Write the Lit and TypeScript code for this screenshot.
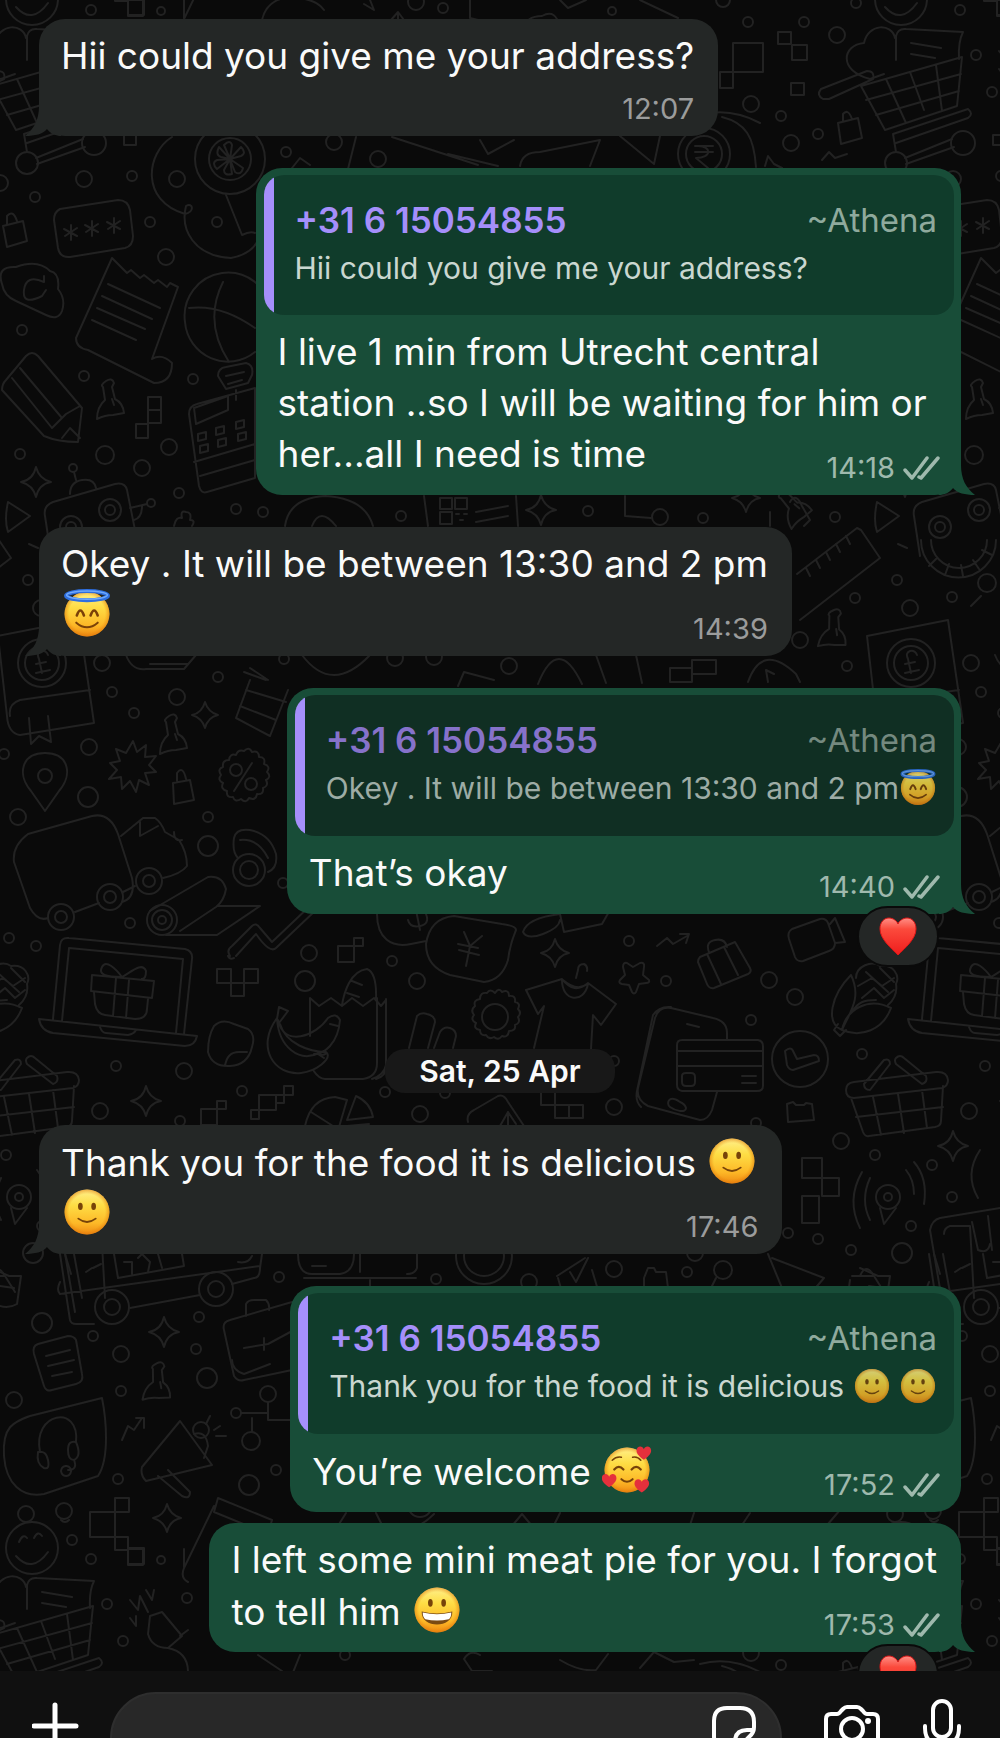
import { LitElement, html, svg, css, nothing } from "lit";
import { customElement, property } from "lit/decorators.js";
import { classMap } from "lit/directives/class-map.js";

type Face = "halo" | "smile" | "love" | "grin";
type Piece = string | { face: Face };

interface Quote {
  lines: Piece[];
  dim?: boolean;
}

interface Message {
  out?: boolean;
  time: string;
  lines: Piece[][];
  quote?: Quote;
  tail?: boolean;
  stacked?: boolean;
  reaction?: boolean;
  tight?: boolean;
}

const TILE_W = 869;
const TILE_H = 1549;

const DOTS = `91,10,5 161,11,4 416,2,8 443,8,5 612,11,4 723,0,7 748,22,5 804,22,5 856,3,5 837,35,8 751,104,8
781,116,5 791,143,8 818,134,5 976,55,5 992,92,5 334,142,8 286,152,5 378,159,8 84,179,8 132,176,5 177,179,8
35,197,5 0,183,8 150,222,5 217,222,5 166,257,8 22,330,5 84,376,5 193,379,5 105,455,9 169,447,8 20,454,5
142,468,8 179,493,5 236,509,5 263,512,5 401,516,5 588,511,5 703,518,5 835,517,5 897,580,5 987,583,9 855,598,5
910,608,8 952,597,5 800,640,8 284,659,5 102,663,8 509,666,8 847,666,5 218,677,5 395,658,8 434,657,8 112,692,5
177,697,8 134,713,5 89,747,8 88,797,10 4,754,5 18,817,8 208,817,5 208,846,10 283,883,5 130,923,5 9,938,5
36,946,5 309,953,8 305,981,10 392,961,5 417,981,8 629,941,5 666,981,5 769,980,8 795,997,8 116,1066,5
184,1071,8 100,1111,8 180,1121,5 242,1091,5 385,1092,5 445,1093,5 420,1114,8 751,1020,5 862,1054,5 614,1107,8
614,1061,5 756,1123,5 841,1141,8 6,1155,5 952,1197,5 932,1165,5 911,1226,5 851,1250,5 902,1253,10 818,1239,5
788,1233,5 279,1277,5 436,1279,5 529,1282,8 614,1269,8 687,1272,5 695,1253,8 199,1317,5 93,1336,5 42,1323,10
121,1354,8 196,1349,5 14,1400,8 121,1391,5 207,1378,10 118,1479,5 276,1470,5 249,1485,10 26,1514,8 64,1511,8
72,1540,5 187,1598,5 345,1655,5 230,159,35 230,159,21 704,154,26 704,154,18 110,510,11 110,510,5 71,527,11 71,527,5
73,468,4 151,503,4 660,517,8 32,1548,26 42,663,24 42,663,17 45,776,7 61,917,13 61,917,6 110,897,13 110,897,6
149,881,13 149,881,6 162,920,15 162,920,10 162,920,4 249,870,16 249,870,9 495,1017,13 800,1059,28 888,1197,4
888,1197,12 112,1307,17 112,1307,8 216,1289,17 216,1289,8 268,1394,8 236,1413,5 251,1441,9 896,163,11 963,143,12
484,1256,28 484,1256,20 236,770,6 251,784,6 723,1270,9 201,1430,8 420,1505,12`;

const BOXES = `733,43,30,29 778,32,13,12 792,45,15,15 791,83,13,12 720,72,13,16 128,0,15,16 124,135,12,10
148,397,13,13 148,410,13,13 136,424,12,14 217,969,14,14 244,969,14,14 231,983,13,13 338,946,16,16 354,938,9,8
201,1109,16,16 217,1101,9,8 251,1110,8,9 259,1095,17,15 276,1095,8,8 284,1086,9,9 541,1092,14,13 555,1105,14,13
569,1105,14,13 802,1158,20,20 822,1178,17,18 802,1196,17,27 115,1498,14,14 90,1512,25,25
115,1537,13,13 128,1548,16,16 440,498,12,11 455,498,12,11 440,512,12,12 692,660,24,14 670,668,22,14`;

const SPARKS = `36,482,15 541,510,15 205,715,13 555,953,14 146,1101,15 953,1146,15 164,1332,15 167,1518,14 746,498,14`;

const PINS = `112,400,0 175,735,0 160,1383,8 836,630,10 795,505,-30`;

const STROKES = [
  // shopping cart, label and heart
  "M823 99q-7-4-2-10l46-18q8 0 6 8l-44 20zM861 86L962 57 957 106 885 130zM866 100l95-26M876 115l83-24M886 79l20 44M910 72l14 38M936 65l6 46M893 134l75-25q6 5 0 9l-72 25M893 134l3 18M905 158l47-19M906 164l48-17",
  "M896 60V36q2-8 10-7l57 3q-5 10-4 27M911 43l30 5M911 54l24 4M870 79c-32-8-28-34-6-36 4-20 28-20 31-5M870 79l14-5",
  "M19 1542q4-9 8-4M34 1538q4-8 8-2M16 1556q16 18 32-4",
  // padlocks and password field
  "M838 123l20-5 4 20-21 6zM843 121v-7q5-6 9 5M3 226l20-5 4 20-20 6zM7 224v-8q6-7 10 5M173 783l17-3 4 20-20 4zM177 781v-8q6-8 9 6",
  "M60 209l58-9q10 0 12 10l3 26q0 10-8 12l-55 9q-10 1-12-9l-4-28q0-8 6-11zM71 225v15M64 229l13 7M77 228l-12 8M92 221v15M85 225l13 7M98 224l-12 8M114 218v15M107 222l13 7M120 221l-12 8",
  // citrus, blob and coins
  "M230 159l-6-14q6-6 8 0zM230 159l11-12q6 6 0 9zM230 159l13 9q-2 8-8 4zM230 159l2 15q-8 2-8-4zM230 159l-13 10q-6-6 0-9zM230 159l-11-12q-4 8 2 10zM172 137c-26 16-32 64 13 77 10-2 8-12 1-8-6 24 8 50 45 52q20-4 26-16M226 195l16 40q8-4 13-2M695 146h18M695 152h18M698 146c14 0 14 12-2 12l12 10M722 117c24 6 32 20 34 50",
  "M356 137l-8 32M392 137l86 28M448 154l50 12M480 140l8 14 26-14M520 166q2-14 20-14l60-12-10 26M620 136l34 28 6-28M765 166l3-10 6 8 8 4M822 160l7-8 6 6 12-4M310 165l-10-7-8 10M560 0l8 8 18-8M470 0v18l40 10M522 30q4-14 20-14 14-8 18 12M184 0v18M262 20q4-18 22-22 30-2 40 12M364 4l10 6-4-10M640 0l38 18M398 14v12M391 20l7-8 6 8",
  // receipt, cloud badge, ball
  "M112 258l-36 80q0 10 12 12l66 33q18 0 18-20-10-10-20-4l26-72-8-4-3 4-9-7-4 3-10-8-4 3-9-8-4 3-8-8zM108 284l52 24M102 296l50 23M97 308l48 21M92 320l44 20",
  "M2 284q-6-18 14-17 22-8 34 4 10 2 8 18 8 10 4 22-4 10-16 4l-30-14Q4 296 2 284zM44 282q-18-8-20 8t18 6l4-6M44 282v-6",
  "M185 322a43 43 0 0 1 86-12M185 322a43 43 0 0 0 70 30M223 282q-20 40 6 80M189 308q32-4 66 20",
  // pencil, calculator
  "M2 390q0-6 4-10l20-24q6-6 12 0l44 52-4 34q-20 0-34-6zM12 378l40 50M20 368l42 50M52 428l14-14 14-8M62 438l8-10 10 10",
  "M189 414q0-8 8-10l58-16v90l-48 14q-6 2-8-6zM194 408l34-12v14l-32 14zM198 434l8-2v7l-8 2zM216 428l8-2v7l-8 2zM236 422l8-2v7l-8 2zM200 446l8-2v7l-8 2zM218 440l8-2v7l-8 2zM238 434l8-2v7l-8 2zM194 462l61-18M200 476l55-16M218 376q0-8 8-9l20-4q8 2 6 12l-4 8-22 6zM226 376l18-4M228 384l14-4M236 390v10",
  // robot
  "M45 516q-2-10 8-14l62-18q10-2 12 6l12 60M45 516l6 40M70 494q0-12 12-14t14 8M74 472l2 8M130 508l17-4M134 520q8-2 8-14M52 540a37 37 0 0 0 75 0M62 540a27 27 0 0 0 56 0M68 558l-8 8M80 564l-4 11M92 565l2 11M104 560l6 9M113 550l10 5M38 548l-9-4M8 502l22 14-22 16q-4-12 0-30zM174 526q2-10 8-8-2-8 4-6 6 0 4 8 6 0 2 6",
  // things under the first reply
  "M285 526q4-28 40-30 40 2 48 30M312 526q8-20 24 0M424 496l4 30M516 496l2 30M476 512l32-6M476 522l32-6M625 496v20l26 2M790 502q6-10 12 4l8 14-6 6M770 526v-14M456 514h3M464 514h3M460 520h3",
  // ruler, book with pound sign
  "M797 574l60-46 4 2 19 28-80 62M806 568l4 8M816 560l4 8M826 552l4 8M836 544l4 8M846 536l4 8M981 596l-10 10M-2 636l81-16 15 103-74 12q-12-2-13-19L-2 636M10 716q-2-12 10-16l70-10M29 718l2 26 8-8 12 6-3-26M48 655q-2-5-7-4-5 2-2 8l3 14M36 664l10-2M36 673l14-3",
  "M126 655q6 16 20 14h38l12-14M150 664h38M302 655q30 40 68 0M244 672l22 8M250 668l18 12M458 686l6-14 30 8M538 684q20-50 44 0M596 655l10 28M636 655l6 28M748 682q14-40 48-8l4 8M768 682l-2-12 8 4",
  // drawing pin, badges and map marker
  "M45 811l-14-20c-14-16-10-38 14-38s28 22 14 38zM252 763l-18 28M133 741l4 11 9-7-1 12 11-1-7 9 7 7-11 1 4 12-10-5-3 12-6-11-8 8-1-12-12 2 8-9-7-7 10-2-4-12 10 4z",
  "M244 751q5-5 8 1 7-2 7 5 7 0 5 7 7 2 3 8 5 5-1 8 3 6-3 8 1 7-6 6-1 7-8 4-3 6-8 1-6 4-8-2-7 1-6-6-7-2-4-8-6-3-2-8-4-6 2-8-1-7 6-7 1-7 7-5 2-6 8-4z",
  "M250 680l-14 38 34 18 18-46M246 690l40 12M240 706l36 14",
  // van
  "M14 862q-2-16 14-28l64-18q18-4 26 18l14 44q4 20-10 24M14 862l16 46q8 14 18 10M75 912l24-9M123 892l12-6M121 836l22-18 12 0q6 4 10 14l14 8q8 12 8 26-6 8-24 12M140 822v14l18-10M174 832q0 10 8 8M234 838q2-10 16-8 20 4 26 24 2 14-8 18M234 838q-2 14 4 20M240 840q18-2 28 18",
  "M150 911l58-34q14-2 18 12-2 12-10 18l-36 24M166 935h51l43-29-42 0M230 956q-4-6 2-10l20-20q4-4 8 2l12 14 40-38M236 956l20-22q14 20 20 14l40-38M234 958q-4 2-6-2",
  // laptop with a present
  "M53 1019l7-74q1-8 9-7l116 11q8 2 7 10l-8 75M62 1021l7-73 114 11-7 74M39 1019l158 17q-2 10-12 10l-132-13q-12-2-14-14zM100 1027q2 6 6 6l22 2q6-1 8-5",
  "M92 975l62 6-2 17-61-7zM94 992l1 12q2 10 10 11l30 4q12 0 12-10l1-10M116 978l-3 38M129 980l-3 38M122 977c-6-8-16-18-20-10s4 10 20 10c8-4 20-16 24-6q0 8-4 8",
  // squares, bread bag, bananas
  "M310 1036v-38l9 8 12-8 11 8 10-8 11 8 11-8 7 8 5-6v62q2 14-10 17M313 1070q6 9 12 9h38q14-2 14-16v-65M342 1005c2-12 8-34 25-36q10 4 9 30M352 981l10 4M347 993l12 4M386 999v66q-2 10-14 14",
  "M279 1007l9 4-9 12-2-4zM277 1018c-22 30-2 58 24 55 16-2 30-14 26-20q-6 4-8 0c-20 10-40-6-42-34M278 1020c6 28 38 16 50-2q8-6 12 2c-2 24-16 34-26 34M280 1024c6 20 30 28 46 28M330 1024l8 2M318 1054l6 4",
  "M214 1026q8-8 20-2l14 5q8 6 4 18-4 18-22 19t-22-14q0-16 6-26zM225 1066q2-14 14-14l8 0",
  "M409 1048l8-32q4-4 10-2 8 2 8 8l-7 26M434 1048l6-16q4-6 10-4t6 8l-3 12",
  // money bags
  "M377 914c0 24 14 34 34 30l15-3M408 920q2 8 12 6t6-12M416 910l4 20M426 944q4-26 28-28l48 8q14 2 14 6-6 14-8 30-6 20-24 22l-34-7q-24-8-24-31zM464 932l6 14 12-10M470 946l-4 20M459 950l20 5M458 944l20 4",
  "M523 932q4-14 37-18M523 932q4 8 20 2t17-14M560 914l4 18 38-8 8-14M657 946l10-8 6 6 14-8M680 934l9 0-3 9",
  "M495 993q4-6 7-1 7-3 7 4 7-1 6 6 6 1 3 7 4 4 0 8 3 6-3 8 1 6-6 6-1 7-7 5-4 5-8 1-5 3-8-2-6 1-6-5-7-1-4-7-6-3-2-8-4-5 1-9-2-6 5-7 0-7 7-6 3-5 8 0z",
  // clothes, star, suitcase, video
  "M526 990l36-11q12 16 26 4l28 21-15 21-8-10-2 34M526 990l12 24 6-8-10 42M562 980c0 22 22 24 26 4M563 980q14 12 24 4M576 978l2-8q0-6 6-6 4 2 3 7",
  "M623 967q0-5 4-4l6 4 7-4q5-1 4 4l-1 8 6 5q1 3-3 3l-7 1-3 8q-2 3-4 0l-3-7-7-1q-4-1-2-4l5-5z",
  "M700 957l35-15 15 26q2 4-2 6l-34 14q-5 1-7-4l-9-22q0-3 2-5zM709 952q-4-10 6-12t12 7M707 954l14 30M724 947l14 28",
  "M792 929l28-10q6-1 8 4l7 20q0 6-6 8l-26 10q-6 1-8-4l-6-18q-2-7 3-10zM830 924l5-6 10 24-10 1",
  // phone with bank card, clock
  "M727 1039v-6q0-12-14-15l-42-10q-12-2-16 10l-17 70q-2 12 10 18l52 14q8 0 12-10l5-18M671 1007q-12-1-18 8l-16 76q-2 10 4 16M687 1024l12 3M680 1102c-12-8-14 2-10 5s16 7 16 1q-1-4-6-6zM682 1040h76q5 1 5 6v40q0 5-6 5h-75q-5-1-5-6v-40q0-5 5-5zM677 1051h86M677 1066h86M682 1076q0-3 4-3h5q4 0 4 4v5q0 4-4 4h-5q-4 0-4-4zM742 1076h14M742 1083h14",
  "M785 1051q6-5 8 0l4 8 17-4q5 0 5 6l-26 9q-4 0-6-5z",
  // corn cob
  "M851 975c-20 20-26 48-9 55 8-18 20-32 9-55zM842 1030c4-20 26-34 49-22-8 22-30 30-49 22zM838 1024l-4 6 6 6 6-6M856 978c0-12 16-18 24-12 14-2 20 10 16 18q2 12-8 21M858 986l14-8 10 8 12-8M862 998l12-10 10 10 10-8M866 972l22 20M880 968l14 14M852 1012c6-10 12-12 24-12",
  // basket
  "M846 1090q0-7 8-8l82-10q11-1 12 8 0 6-6 8l-88 10q-8 0-8-8zM851 1098l12 34q2 5 6 4l66-9q6-1 6-6l2-35M873 1097l8 38M898 1094l6 39M922 1090l5 38M856 1117l87-10M864 1084l20-24q6-2 6 4l-20 26q-6 0-6-6zM896 1058q4-4 8 0l22 18q2 6-4 8l-26-20q-2-4 0-6z",
  // items around the date
  "M305 1126q6-28 30-29l12 3-8 27M311 1112l22 14M356 1096q14 6 17 21l-26 3zM347 1126l22-2M468 1122q-2-8 6-12l24-14q6-2 10 6l20 30M500 1126l8-14 8 12M508 1112v16M787 1104l6-2 3 3h8l2-2 6 1 2 16-26 2z",
  // podcast, balloon face
  "M870 1178q-10 22 0 42M862 1172q-16 28-2 56M906 1170q8 10 8 24M914 1162q14 16 10 42M880 1208l4 16 12-16M980 1150q-16 24-2 48",
  // tram
  "M60 1254l10 66q1 4 6 4h18M65 1254l6 20M130 1308l70-13M232 1284l22-6q6 0 6-10l2-14M60 1282q-4 8 0 12l200-28M74 1254l8 44M92 1268l-6 4M114 1254l4 24 66-12-2-12M124 1262h8v12M138 1258l4-4 8 8-2 10M158 1254l4 14M238 1262q10 2 14-6",
  "M298 1254q0 20 14 20h28q14-2 14-20M304 1278h112M312 1266h14M360 1254v18M417 1254v14q-2 6-10 6M370 1280v8",
  "M557 1276l28-18M558 1278l4 14M570 1272l6 10 12-24M592 1270l6 20M644 1278l4-10 6 0 2 4 10 0 2 16-24 4zM768 1254l14 34M772 1258l52 20-12 14 10 14M852 1276l22 0 10 16M850 1280l-2 14M860 1276q6-14 14 0M716 1278l-6 12",
  // store on the right
  "M930 1230q2-10 10-12l60-10M930 1230l14 82M944 1234q0-6 6-8h20l4 72M972 1222l6 28q10 4 12-6M988 1216l4 34M962 1268l8-4M-9 1268l18 8 12 0-4 28q-10 6-22 0M0 1286l14 2",
  // briefcase, document, headset bubble
  "M224 1330q-2-8 6-10l62-18M224 1330l10 46q4 6 10 4l48-10M246 1316v-12q2-4 8-4h12q4 4 3 10M244 1348l24-4 26-14M264 1338v12",
  "M34 1354q-2-8 4-10l30-8q6 0 8 4l6 34q2 8-6 10l-24 6q-6 2-8-4zM46 1356l24-6M48 1366l26-6M52 1376l20-4",
  "M102 1398c4 20 8 60-4 78l-54 18c-22 4-38-10-40-38-2-30 10-34 26-40zM40 1452c-8-40 40-48 36-10M38 1452q8-2 10 8t-4 8q-8-4-6-16zM76 1442q-8-2-8 8t6 10q8-4 2-18M74 1460q4 10-6 10M66 1466a5 5 0 1 0 .1 0",
  // megaphone, trend arrow
  "M180 1421l32 44-66 16q-6-6-4-14zM158 1476l24 20q8 4 8-4l-22-22M194 1434q12-4 14 12l-4 12M206 1424l4-8M214 1430l6-4M216 1436h10M122 1440l6-14 6 4 8-12M136 1418l8 0v10M268 1402v18l28 0M241 1413h27M252 1418v14M232 1360q0 10 12 14l26-10",
  // closed books and bottom items
  "M218 1498l54 22-4 14-54-22zM214 1506l-30 62q-4 10 4 14M346 1513l-10 16M376 1513l8 16M392 1526q20 10 42-12M512 1526l10-12 10 12M560 1513l-6 12M694 1513l-4 12M750 1513l-8 12M840 1510l-12 14M930 1520q4 4 8 0",
  "M130 1600l8 10 2-14 8 16M146 1590l6 10 2-10M150 1616l12-4 20 24-14 12q-16 0-20-14zM130 1618l6 8 0-10M168 1648q20 4 20 24M180 1636l8-6",
  "M480 1655q-10-6-16 4l8 12 20 0M560 1660q20 12 36 10l12-16M640 1668l14-16 20 10 20-2M700 1664q30-8 60 8M258 1655l24 16M300 1655l-8 20",
];

const nums = (s: string) => s.trim().split(/\s+/).map((t) => t.split(",").map(Number));

const FACE_LABEL: Record<Face, string> = {
  halo: "😇",
  smile: "🙂",
  love: "🥰",
  grin: "😀",
};

const heart = (x: number, y: number, k: number) => svg`
  <path transform="translate(${x} ${y}) scale(${k})" fill="#e5303c"
    d="M0 10C-10 3-11-1-11-4-11-11-2-12 0-6 2-12 11-11 11-4 11-1 10 3 0 10z"></path>`;

const features: Record<Face, unknown> = {
  halo: svg`
    <path d="M14.500 26q3.500-10 7 0M28 26q3.500-10 7 0" fill="none" stroke="#7a4108" stroke-width="2.500" stroke-linecap="round"></path>
    <path d="M14 33q10.500 9 21 0" fill="none" stroke="#7a4108" stroke-width="2" stroke-linecap="round"></path>
    <ellipse cx="24.500" cy="6.500" rx="20.500" ry="4.500" fill="none" stroke="#2e6fe0" stroke-width="4"></ellipse>
    <ellipse cx="24.500" cy="6" rx="20" ry="4" fill="none" stroke="#6ea8fb" stroke-width="1.500"></ellipse>`,
  smile: svg`
    <ellipse cx="18" cy="19" rx="2.300" ry="3.500" fill="#774309"></ellipse>
    <ellipse cx="31" cy="19" rx="2.300" ry="3.500" fill="#774309"></ellipse>
    <path d="M16 31q8.500 6.500 17 0" fill="none" stroke="#774309" stroke-width="1.800" stroke-linecap="round"></path>`,
  grin: svg`
    <ellipse cx="18" cy="17.500" rx="2.300" ry="3.800" fill="#774309"></ellipse>
    <ellipse cx="31" cy="17.500" rx="2.300" ry="3.800" fill="#774309"></ellipse>
    <path d="M9.500 26q15 4 30 0c1 17-31 17-30 0z" fill="#7a4a12"></path>
    <path d="M10.500 27q14 3.500 28 0 0 5-2.500 6.500-11.500 2.500-23 0-2.500-2-2.500-6.500z" fill="#fff"></path>`,
  love: svg`
    <path d="M12 24q4.500-5 9 0M29 24q4.500-5 9 0" fill="none" stroke="#774309" stroke-width="2.200" stroke-linecap="round"></path>
    <path d="M10 15q4-4 9-3M30 12q5-1 8 3" fill="none" stroke="#774309" stroke-width="1.500" stroke-linecap="round"></path>
    <path d="M19 33.500q5.500 5 11 0" fill="none" stroke="#774309" stroke-width="2" stroke-linecap="round"></path>
    ${heart(41, 8, 0.65)}${heart(7, 35, 0.65)}${heart(39, 40, 0.65)}`,
};

const drawFace = (face: Face) => html`<svg class="face" viewBox="0 0 49 49" role="img" aria-label=${FACE_LABEL[face]}>
  <defs>
    <linearGradient id="skin" x1="0" y1="0" x2="0" y2="1">
      <stop offset="0" stop-color="#fff08c"></stop>
      <stop offset=".35" stop-color="#fedd45"></stop>
      <stop offset=".75" stop-color="#fdb827"></stop>
      <stop offset="1" stop-color="#ef8a12"></stop>
    </linearGradient>
    <radialGradient id="rim">
      <stop offset=".8" stop-color="#e8860c" stop-opacity="0"></stop>
      <stop offset="1" stop-color="#dd740a" stop-opacity=".55"></stop>
    </radialGradient>
  </defs>
  <circle cx="24.500" cy="24.500" r="22" fill="url(#skin)"></circle>
  <circle cx="24.500" cy="24.500" r="22" fill="url(#rim)"></circle>
  ${features[face]}
</svg>`;

const drawPieces = (pieces: Piece[]) => pieces.map((p) => (typeof p === "string" ? p : drawFace(p.face)));

@customElement("chat-wallpaper")
export class ChatWallpaper extends LitElement {
  static styles = css`
    :host {
      position: absolute;
      inset: 0;
      overflow: hidden;
      pointer-events: none;
    }
    .doodles {
      display: block;
      width: 100%;
      height: 100%;
      fill: none;
      stroke: #222222;
      stroke-width: 2;
      stroke-linejoin: round;
      stroke-linecap: round;
    }
  `;

  render() {
    return html`<svg class="doodles" aria-hidden="true">
      <defs>
        <g id="tile">
          ${nums(DOTS).map(([x, y, r]) => svg`<circle cx=${x} cy=${y} r=${r}></circle>`)}
          ${nums(BOXES).map(([x, y, w, h]) => svg`<rect x=${x} y=${y} width=${w} height=${h}></rect>`)}
          ${nums(SPARKS).map(
            ([x, y, s]) => svg`<path d="M${x} ${y - s}q3 ${s - 3} ${s} ${s}q${3 - s} 2 ${-s} ${s}q-3 ${3 - s} ${-s} ${-s}q${s - 3}-2 ${s} ${-s}z"></path>`,
          )}
          ${nums(PINS).map(
            ([x, y, a]) => svg`<path transform="translate(${x} ${y}) rotate(${a})"
              d="M-6-19q6-4 8 2l-2 4 3 12q8 4 9 14l-11 2q-8 0-16 4 0-12 8-19l-2-13q-3-2 3-6zM0-1l2 6"></path>`,
          )}
          ${STROKES.map((d) => svg`<path d=${d}></path>`)}
        </g>
      </defs>
      ${[-1, 0, 1].map((i) =>
        [-1, 0, 1].map((j) => svg`<use href="#tile" x=${i * TILE_W} y=${j * TILE_H}></use>`),
      )}
    </svg>`;
  }
}

@customElement("chat-message")
export class ChatMessage extends LitElement {
  @property({ attribute: false }) message!: Message;

  static styles = css`
    :host {
      display: flex;
      flex-direction: column;
      align-items: flex-start;
      --fill: #242726;
      --meta: #9b9c9c;
    }
    :host([out]) {
      align-items: flex-end;
      --fill: #184d38;
      --meta: #9fb9ad;
    }
    .bubble {
      position: relative;
      box-sizing: border-box;
      border-radius: 26px;
      background: var(--fill);
      color: #fafafa;
    }
    .tail {
      position: absolute;
      left: -14px;
      bottom: 0;
      width: 36px;
      height: 30px;
      fill: var(--fill);
    }
    :host([out]) .tail {
      left: auto;
      right: -14px;
      transform: scaleX(-1);
    }
    .quote {
      display: flex;
      flex-direction: column;
      gap: 10px;
      margin: 0 7px 0 8px;
      padding: 25px 17px 29px 31px;
      border-radius: 20px;
      background: linear-gradient(to right, #a58ffb 10px, var(--shade) 10px);
      --shade: #103c2b;
      --name: #a58ffb;
      --alias: #8faa9d;
      --quoted: #cad7d0;
    }
    .dim {
      --shade: #102f23;
      --name: #8672ca;
      --alias: #74897f;
      --quoted: #9daca5;
    }
    .with-quote {
      padding-top: 7px;
    }
    .who {
      display: flex;
      justify-content: space-between;
      gap: 40px;
      font-size: 33px;
      line-height: 40px;
    }
    .name {
      font-size: 35px;
      font-weight: 600;
      color: var(--name);
    }
    .alias {
      color: var(--alias);
    }
    .quoted {
      margin: 0;
      font-size: 30px;
      line-height: 36px;
      white-space: nowrap;
      color: var(--quoted);
    }
    .body {
      display: grid;
      padding: 11px 24px 12px 22px;
    }
    .text {
      grid-area: 1 / 1;
      margin: 0 0 4px;
      font-size: 37px;
      line-height: 51px;
      white-space: pre;
    }
    .line {
      display: block;
      height: 51px;
    }
    .meta {
      grid-area: 1 / 1;
      align-self: end;
      justify-self: end;
      display: flex;
      gap: 8px;
      margin-bottom: -1px;
      font-size: 29px;
      line-height: 32px;
      color: var(--meta);
    }
    :host([out]) .meta {
      margin-right: -3px;
    }
    .stacked .meta {
      grid-area: 2 / 1;
      margin-top: 8px;
    }
    .ticks {
      width: 37px;
      height: 32px;
      fill: none;
      stroke: currentColor;
      stroke-width: 3.5;
      stroke-linecap: round;
      stroke-linejoin: round;
    }
    .face {
      display: inline-block;
      width: 50px;
      height: 50px;
      margin: 0 1px;
      vertical-align: -10px;
    }
    .quoted .face {
      width: 38px;
      height: 38px;
      margin: -1px 0 0;
      vertical-align: -8px;
      opacity: 0.82;
    }
    .reaction {
      position: relative;
      z-index: 1;
      box-sizing: border-box;
      display: grid;
      place-items: center;
      width: 82px;
      height: 61px;
      margin: -8px 22px 0 0;
      padding: 0;
      border: 2px solid #0a0a0a;
      border-radius: 31px;
      background: #242726;
    }
    .heart {
      width: 40px;
      height: 40px;
    }
  `;

  render() {
    const m = this.message;
    return html`
      <article class=${classMap({ bubble: true, "with-quote": !!m.quote })}>
        ${m.tail === false
          ? nothing
          : html`<svg class="tail" viewBox="0 0 36 30" aria-hidden="true">
              <path d="M14 0C14 14 9 23 0 30 10 30 18 28 22 23 26 28 31 30 36 30V0z"></path>
            </svg>`}
        ${m.quote
          ? html`<blockquote class=${classMap({ quote: true, dim: !!m.quote.dim })}>
              <div class="who"><span class="name">+31 6 15054855</span><span class="alias">~Athena</span></div>
              <p class="quoted">${drawPieces(m.quote.lines)}</p>
            </blockquote>`
          : nothing}
        <div class=${classMap({ body: true, stacked: !!m.stacked })}>
          <p class="text">${m.lines.map((line) => html`<span class="line">${drawPieces(line)}</span>`)}</p>
          <div class="meta">
            <time>${m.time}</time>
            ${m.out
              ? html`<svg class="ticks" viewBox="0 0 37 32" role="img" aria-label="Delivered">
                  <path d="M2 18l7 8L24 6M16 25l2 1L35 6"></path>
                </svg>`
              : nothing}
          </div>
        </div>
      </article>
      ${m.reaction
        ? html`<button class="reaction" type="button" aria-label="Reaction: ❤️">
            <svg class="heart" viewBox="0 0 40 40" aria-hidden="true">
              <defs>
                <linearGradient id="love" x1="0" y1="0" x2="0" y2="1">
                  <stop offset="0" stop-color="#ff8f86"></stop>
                  <stop offset=".3" stop-color="#fb4a3c"></stop>
                  <stop offset="1" stop-color="#ee1c1c"></stop>
                </linearGradient>
              </defs>
              <path fill="url(#love)" stroke="#e01616" stroke-width="1"
                d="M20 38C13 31 2 22 2 12 2 5 6 1 11 1 15 1 19 4 20 7 21 4 25 1 29 1 34 1 38 5 38 12 38 22 27 31 20 38z"></path>
            </svg>
          </button>`
        : nothing}
    `;
  }
}

@customElement("app-root")
export class AppRoot extends LitElement {
  private before: Message[] = [
    { time: "12:07", lines: [["Hii could you give me your address?"]], stacked: true },
    {
      out: true,
      time: "14:18",
      quote: { lines: ["Hii could you give me your address?"] },
      lines: [
        ["I live 1 min from Utrecht central "],
        ["station ..so I will be waiting for him or "],
        ["her...all I need is time"],
      ],
    },
    { time: "14:39", lines: [["Okey . It will be between 13:30 and 2 pm"], [{ face: "halo" }]] },
    {
      out: true,
      time: "14:40",
      quote: { dim: true, lines: ["Okey . It will be between 13:30 and 2 pm", { face: "halo" }] },
      lines: [["That’s okay"]],
      reaction: true,
    },
  ];

  private after: Message[] = [
    {
      time: "17:46",
      lines: [["Thank you for the food it is delicious ", { face: "smile" }], [{ face: "smile" }]],
    },
    {
      out: true,
      time: "17:52",
      tail: false,
      quote: { lines: ["Thank you for the food it is delicious ", { face: "smile" }, " ", { face: "smile" }] },
      lines: [["You’re welcome ", { face: "love" }]],
    },
    {
      out: true,
      time: "17:53",
      tight: true,
      lines: [["I left some mini meat pie for you. I forgot"], ["to tell him ", { face: "grin" }]],
      reaction: true,
    },
  ];

  static styles = css`
    :host {
      display: flex;
      flex-direction: column;
      height: 100vh;
      overflow: hidden;
      background: #0a0a0a;
      font-family: Inter, "Liberation Sans", sans-serif;
    }
    .thread {
      position: relative;
      flex: 1;
      min-height: 0;
      overflow: hidden;
    }
    .messages {
      position: relative;
      display: flex;
      flex-direction: column;
      gap: 32px;
      padding: 19px 39px 0;
    }
    .tight {
      margin-top: -21px;
    }
    .day {
      align-self: center;
      margin: 50px 0 0;
      padding: 0 34px;
      border-radius: 20px;
      background: #181818;
      color: #fafafa;
      font-size: 30px;
      font-weight: 600;
      line-height: 44px;
    }
    .composer {
      flex: 0 0 67px;
      box-sizing: border-box;
      display: flex;
      align-items: flex-start;
      overflow: hidden;
      padding: 21px 37px 0 32px;
      background: #101010;
    }
    .field {
      flex: 1;
      display: flex;
      align-items: flex-start;
      box-sizing: border-box;
      min-width: 0;
      height: 92px;
      margin: 0 37px 0 26px;
      padding: 0 19px 0 30px;
      border: 2px solid #2e2e2e;
      border-radius: 46px;
      background: #282828;
    }
    .entry {
      flex: 1;
      align-self: stretch;
      min-width: 0;
      border: 0;
      outline: 0;
      background: none;
      color: #fafafa;
      font: inherit;
      font-size: 37px;
    }
    .icon {
      display: block;
      padding: 0;
      border: 0;
      background: none;
      color: #fff;
    }
    .glyph {
      display: block;
      width: 52px;
      height: 72px;
      fill: none;
      stroke: currentColor;
      stroke-width: 4;
      stroke-linecap: round;
      stroke-linejoin: round;
    }
    .icon + .icon {
      margin-left: 40px;
    }
    .wide {
      width: 62px;
    }
    .slim {
      width: 42px;
    }
  `;

  private row(m: Message) {
    return html`<chat-message class=${classMap({ tight: !!m.tight })} ?out=${!!m.out} .message=${m}></chat-message>`;
  }

  render() {
    return html`
      <main class="thread">
        <chat-wallpaper></chat-wallpaper>
        <div class="messages">
          ${this.before.map((m) => this.row(m))}
          <h2 class="day">Sat, 25 Apr</h2>
          ${this.after.map((m) => this.row(m))}
        </div>
      </main>
      <footer class="composer">
        <button class="icon" type="button" aria-label="Attach">
          <svg class="glyph" viewBox="0 0 52 72"><path stroke-width="5" d="M2 34H44M23 13V55"></path></svg>
        </button>
        <div class="field">
          <input class="entry" type="text" aria-label="Message" />
          <button class="icon" type="button" aria-label="Stickers">
            <svg class="glyph" viewBox="0 0 52 72">
              <path d="M18 14H31Q45 14 45 28V33Q45 38 42 41L30 53Q27 55 22 55H18Q5 55 5 42V27Q5 14 18 14zM26 54V48Q26 36 38 36H44"></path>
            </svg>
          </button>
        </div>
        <button class="icon" type="button" aria-label="Camera">
          <svg class="glyph wide" viewBox="0 0 62 72">
            <path d="M12 22H18Q20 22 22 19L24 17Q26 15 28 15H38Q40 15 42 17L44 19Q46 22 48 22H54Q59 22 59 27V54Q59 59 54 59H12Q7 59 7 54V27Q7 22 12 22z"></path>
            <circle cx="33" cy="37" r="11"></circle>
            <circle cx="49" cy="29" r="1.500" stroke-width="3"></circle>
          </svg>
        </button>
        <button class="icon" type="button" aria-label="Voice message">
          <svg class="glyph slim" viewBox="0 0 42 72">
            <rect x="12" y="9" width="18" height="36" rx="9"></rect>
            <path d="M4 34V36Q4 53 21 53T38 36V34M21 53V62"></path>
          </svg>
        </button>
      </footer>
    `;
  }
}
